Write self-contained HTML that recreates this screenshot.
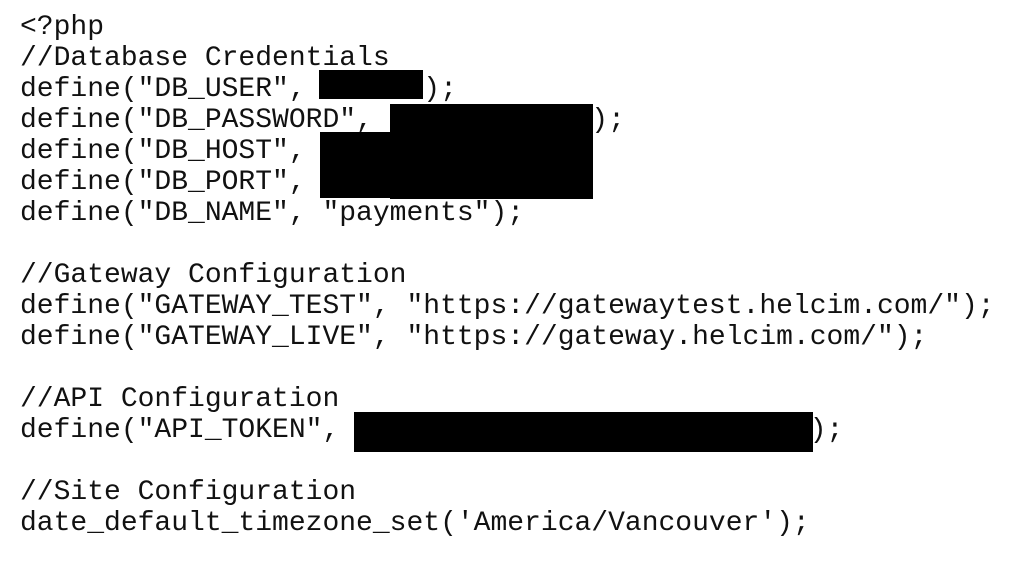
<!DOCTYPE html>
<html><head><meta charset="utf-8"><style>
html,body{margin:0;padding:0;background:#fff;width:1026px;height:586px;overflow:hidden}
pre{margin:0;position:absolute;left:20px;top:12px;font-family:"Liberation Mono",monospace;font-size:28px;line-height:31px;color:#111}
.b{position:absolute;background:#000}
</style></head><body>
<pre>&lt;?php
//Database Credentials
define("DB_USER",       );
define("DB_PASSWORD",             );
define("DB_HOST",
define("DB_PORT",
define("DB_NAME", "payments");

//Gateway Configuration
define("GATEWAY_TEST", "https://gatewaytest.helcim.com/");
define("GATEWAY_LIVE", "https://gateway.helcim.com/");

//API Configuration
define("API_TOKEN",                            );

//Site Configuration
date_default_timezone_set('America/Vancouver');</pre>
<div class="b" style="left:319px;top:70px;width:104px;height:29px"></div>
<div class="b" style="left:390px;top:104px;width:203px;height:95px"></div>
<div class="b" style="left:320px;top:132px;width:273px;height:66px"></div>
<div class="b" style="left:354px;top:412px;width:459px;height:40px"></div>
</body></html>
